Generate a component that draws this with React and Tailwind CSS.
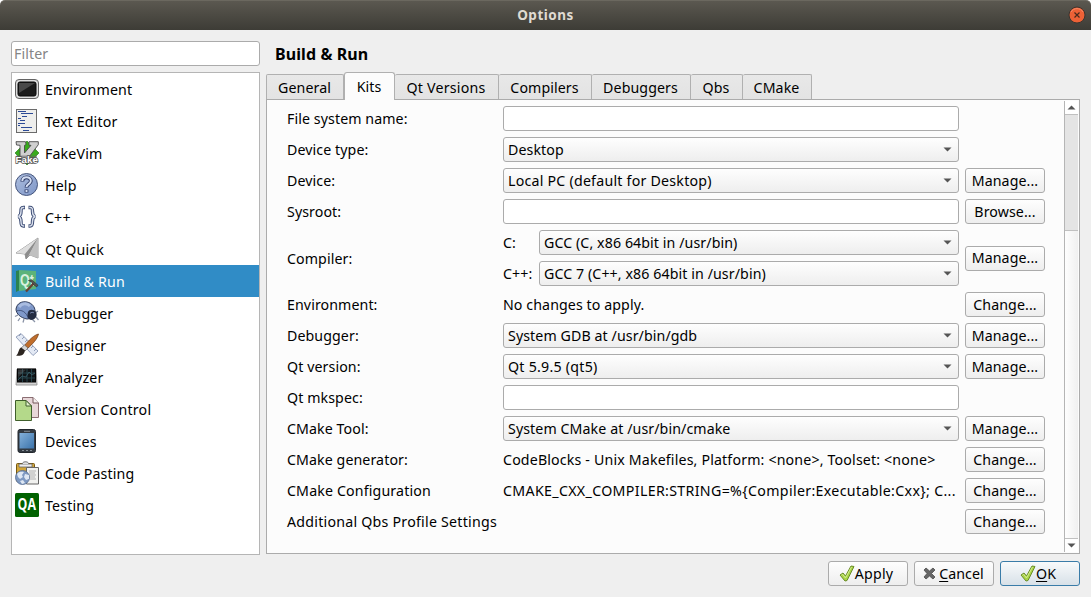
import React from "react";

const dark = "#2f3b66";

const Icons = {
  environment: (
    <>
      <rect x="0.5" y="2.5" width="23" height="19" rx="3.5" fill="#dcdcdc" stroke="#636363" />
      <rect x="3" y="5" width="18" height="14" rx="2" fill="#1b1b1b" stroke="#080808" />
      <path d="M4 6h16L4 16z" fill="#5a5a5a" opacity=".75" />
    </>
  ),
  text: (
    <>
      <rect x="1.5" y=".5" width="20" height="23" fill="#eeeeec" stroke="#6b6b6b" />
      <path d="M3 2.500h8M6 4.500h12M7 7.500h5M3 9.500h3M5 11.500h5M3 14.500h7M3 16.500h2M6 18.500h11M8 21.500h6" stroke="#2c4a96" strokeWidth="1" />
    </>
  ),
  vim: (
    <>
      <path d="M12 0l12 12-12 12L0 12z" fill="#38ab1c" stroke="#226d10" strokeWidth=".6" />
      <path d="M1 .7h9.500l.6 2.800-1.600.8V12L16 4.300h-2V.7h9.300v3L12.500 18H5V4.300L1.500 4z" fill="#d0d0d0" stroke="#4a4a4a" strokeWidth=".9" />
      <path d="M1 14.500h21v7H1z" fill="#666" opacity=".55" />
      <text x="0.500" y="21.500" fontSize="9.500" fontWeight="bold" fontFamily="Liberation Sans, sans-serif" fill="#fff" stroke="#555" strokeWidth="1.500" paintOrder="stroke" textLength="22.500" lengthAdjust="spacingAndGlyphs">Fake</text>
    </>
  ),
  help: (
    <>
      <defs>
        <linearGradient id="hg" x1="0" y1="0" x2="1" y2="1"><stop offset="0" stopColor="#aebfdf" /><stop offset="1" stopColor="#7d95c7" /></linearGradient>
      </defs>
      <circle cx="11.500" cy="11.500" r="11" fill="url(#hg)" stroke="#3a4a70" strokeWidth=".9" />
      <path d="M7.300 8.500c0-5.500 8.500-5.500 8.500-.5 0 3.200-4.300 3-4.300 6.500M11.500 16.500v3" fill="none" stroke={dark} strokeWidth="3.800" />
      <path d="M7.300 8c0-5 8.500-5 8.500 0 0 3.200-4.300 3-4.300 6M11.500 17.100v1.800" fill="none" stroke="#d3def3" strokeWidth="2" />
    </>
  ),
  cpp: (
    <>
      <path d="M10 2.500H8.500c-2.500 0-2.500 1.500-2.500 4s0 4-2.500 5c2.500 1 2.500 2.500 2.500 5s0 4.500 2.500 4.500H10M13.500 2.500H15c2.500 0 2.500 1.500 2.500 4s0 4 2.500 5c-2.500 1-2.500 2.500-2.500 5S17.500 21 15 21h-1.500" fill="none" stroke="#3d4d75" strokeWidth="3.400" strokeLinejoin="bevel" />
      <path d="M9.300 2.500h-.8C6 2.500 6 4 6 6.500s0 4-2.500 5c2.500 1 2.500 2.500 2.500 5s0 4.500 2.500 4.500h.8M14.200 2.500h.8c2.500 0 2.500 1.500 2.500 4s0 4 2.500 5c-2.500 1-2.500 2.500-2.500 5S17.500 21 15 21h-.8" fill="none" stroke="#d8deeb" strokeWidth="1.400" strokeLinejoin="bevel" />
    </>
  ),
  quick: (
    <>
      <path d="M1 16L23 1v20l-8-3-4 4-1-5z" fill="#c9c9c9" stroke="#858585" strokeWidth=".8" />
      <path d="M1 16L23 1 10 17z" fill="#dedede" />
      <path d="M23 1L10 17l1 5 3-4z" fill="#8c8c8c" />
      <path d="M23 1L14 18l9 3z" fill="#c0c0c0" />
    </>
  ),
  build: (
    <>
      <path d="M1 2L5 1v20l-4 2z" fill="#2c824f" />
      <path d="M4 1l17 1v18L4 22z" fill="#5cb37a" />
      <text x="5" y="17" fontSize="16" fontWeight="bold" fontFamily="Liberation Sans, sans-serif" fill="#d9f0df" textLength="14" lengthAdjust="spacingAndGlyphs">Qt</text>
      <path d="M11 22.500l7.500-8" stroke="#6b4030" strokeWidth="2.300" />
      <path d="M13.500 11.500l3-.8 6.500 5.500-1.300 1.700-3.200-2.200-1-2z" fill="#555" stroke="#2c2c2c" strokeWidth=".6" />
    </>
  ),
  debugger: (
    <>
      <path d="M3 14l-3 1.500M5 17l-2 3M9 18l-1 3.500M16 17l4 4M20 12l3-2M21 16l2.500 3" stroke="#8a93a6" strokeWidth="1.300" />
      <path d="M1 8C2 2 7 0 12 1c5 1 8 5 8 9 0 5-4 8-8 8C6 17 1 13 1 8z" fill="#7f98c9" stroke="#2f3b58" />
      <path d="M4 6c3-4 8-4 11-1" fill="none" stroke="#a9bce0" strokeWidth="3" />
      <path d="M1.500 10c5-2 10 1 12 8" fill="none" stroke="#3d4d75" strokeWidth=".9" />
      <path d="M13 11c1-3 6-3 8 0 2 4-1 8-5 8-4-1-4-5-3-8z" fill="#242c42" />
      <path d="M15 12.500c1-1.500 3-1.500 4-.5" fill="none" stroke="#7484aa" />
    </>
  ),
  designer: (
    <>
      <path d="M1 4l5-3.500L23 18l-5 4.500z" fill="#e3e9f4" stroke="#8c99b5" strokeWidth=".9" />
      <path d="M6 1l-2 2M9 4L7 6M12 7l-2 2M18 13l-2 2M21 16l-2 2" stroke="#7e8ba8" strokeWidth=".8" />
      <path d="M23.500 1c-1 5-5.500 9.500-11 14.500l-3-3C14 7 19 2 23.500 1z" fill="#c06e2c" stroke="#6e3a14" strokeWidth=".7" />
      <path d="M9.500 12l3.500 3-3 3-4-3z" fill="#d5d5d5" stroke="#555" strokeWidth=".6" />
      <path d="M6 14.500l4 3c-1 5-5 6-9 5 3-2 2-6 5-8z" fill="#2c2520" />
    </>
  ),
  analyzer: (
    <>
      <path d="M2 4h19l1 16H1z" fill="#d4d4d4" stroke="#858585" strokeWidth=".8" />
      <rect x="2.500" y="4" width="18" height="13" fill="#101417" stroke="#050505" />
      <path d="M3 8h17M3 13h17M7.500 4v13M12 4v13M16.500 4v13" stroke="#2b4e58" strokeWidth=".8" />
      <path d="M3 15l4-4 4 1 3-5 3 3 3-2" fill="none" stroke="#3c626d" strokeWidth=".8" />
      <path d="M3 4.500h8l-8 8z" fill="#888" opacity=".3" />
    </>
  ),
  version: (
    <>
      <path d="M7.500.5H18l5.500 5.500v14.500h-16z" fill="#e8d7d9" stroke="#8b6e73" />
      <path d="M18 .5V6h5.500" fill="#f5eeee" stroke="#75565b" />
      <path d="M.5 3.500H11L16.500 9v14.500H.5z" fill="#b4d98a" stroke="#3f5f2b" />
      <path d="M11 3.500V9h5.500z" fill="#e2f2ce" stroke="#3f5f2b" />
    </>
  ),
  devices: (
    <>
      <defs><linearGradient id="dg" x1="0" y1="0" x2="1" y2="1"><stop offset="0" stopColor="#84b1da" /><stop offset="1" stopColor="#3b73ab" /></linearGradient></defs>
      <rect x="3" y=".5" width="17.500" height="23" rx="2" fill="#333a42" stroke="#22272d" />
      <rect x="4.500" y="4" width="14.500" height="15.500" fill="url(#dg)" />
      <path d="M9 2.300h6M7 21.500h2M11 21.500h2M15 21.500h2" stroke="#8b949d" strokeWidth=".9" />
    </>
  ),
  pasting: (
    <>
      <rect x="1.500" y="2.500" width="18" height="18" rx="1" fill="#d2a63a" stroke="#755813" />
      <path d="M4 3h13v3H4z" fill="#eee" stroke="#666" strokeWidth=".8" />
      <path d="M7 3c1-3 6-3 7 0" fill="#ddd" stroke="#666" />
      <path d="M11.500 6.500h12v16.500h-12z" fill="#f1f1ef" stroke="#666" />
      <path d="M14 10h7M14 12h6M14 14h7M15 16h5M15 18h6" stroke="#aaa" strokeWidth=".9" />
      <circle cx="7.500" cy="16.500" r="7" fill="#7e99c2" stroke="#536b91" strokeWidth=".8" />
      <path d="M2 13c2-3 5-2 7-2l-2 3 1 2-3 2-2-2zM10 13l4 1v4l-3 1-2-3zM5 20l3-1 2 3-3 1z" fill="#dee7f3" />
    </>
  ),
  testing: (
    <>
      <rect width="24" height="24" rx="1.500" fill="#006100" />
      <text x="2.500" y="17" fontSize="16" fontWeight="bold" fontFamily="Open Sans, sans-serif" fill="#fff" textLength="18.500" lengthAdjust="spacingAndGlyphs">QA</text>
    </>
  ),
};

const pages = [
  ["environment", "Environment"],
  ["text", "Text Editor"],
  ["vim", "FakeVim"],
  ["help", "Help"],
  ["cpp", "C++"],
  ["quick", "Qt Quick"],
  ["build", "Build & Run"],
  ["debugger", "Debugger"],
  ["designer", "Designer"],
  ["analyzer", "Analyzer"],
  ["version", "Version Control"],
  ["devices", "Devices"],
  ["pasting", "Code Pasting"],
  ["testing", "Testing"],
];

const tabs = [
  ["General", "w-[78px]"],
  ["Kits", "w-[51px]"],
  ["Qt Versions", "w-[104px]"],
  ["Compilers", "w-[93px]"],
  ["Debuggers", "w-[99px]"],
  ["Qbs", "w-[52px]"],
  ["CMake", "w-[69px]"],
];

function Button({ children, primary = false }) {
  return (
    <button
      className={
        "flex h-[25px] w-20 shrink-0 items-center justify-center rounded-[3px] border bg-linear-to-b whitespace-nowrap " +
        (primary ? "border-[#3a7ca8] from-[#f8fafb] to-[#d8e1e8]" : "border-[#ababab] from-[#fefefe] to-[#eeeeee]")
      }
    >
      {children}
    </button>
  );
}

function Combo({ children, tracking = "" }) {
  return (
    <div className="flex h-[25px] min-w-0 flex-1 items-center justify-between rounded-[3px] border border-[#ababab] bg-linear-to-b from-[#fefefe] to-[#eeeeee] pr-[6px] pl-1">
      <span className={tracking}>{children}</span>
      <svg width="9" height="5" viewBox="0 0 9 5"><path d="M.5.5h8l-4 4z" fill="#555" /></svg>
    </div>
  );
}

const Field = () => <div className="h-[25px] flex-1 rounded-[3px] border border-[#ababab] bg-white" />;

function Row({ label, children, action, tracking = "" }) {
  return (
    <div className="flex h-[25px] items-center">
      <div className={"w-[216px] shrink-0 whitespace-nowrap " + tracking}>{label}</div>
      <div className="mr-1.5 flex w-[456px] shrink-0 items-center whitespace-nowrap">{children}</div>
      {action && <Button>{action}</Button>}
    </div>
  );
}

const Check = () => (
  <svg className="-ml-1" width="16" height="17" viewBox="0 0 16 17">
    <path d="M1 10l3-2 2.500 3L12 1l3 .5L8 15.500l-2 .5z" fill="#a9d543" stroke="#6b8d2a" strokeWidth="1" strokeLinejoin="round" />
    <path d="M2.500 10.200l1.200-.8L6.500 13l6-11" fill="none" stroke="#d3eb94" />
  </svg>
);

export default function App() {
  return (
    <div className="h-[597px] w-[1091px] overflow-hidden bg-white font-['Noto_Sans',sans-serif] text-[14.2px] leading-[18px] tracking-[0.09px] text-black">
      <div className="flex h-full flex-col rounded-t-[5px] bg-[#efefef]">
        <header className="grid h-[30px] shrink-0 grid-cols-[1fr_auto_1fr] items-center rounded-t-[5px] border-t border-[#6b685f] bg-linear-to-b from-[#5b5850] to-[#3d3c36]">
          <span className="col-start-2 -mt-0.5 text-[13.5px] font-bold tracking-[0.5px] text-[#dfdbd2]">Options</span>
          <svg className="col-start-3 mr-[5px] -mt-px justify-self-end" width="18" height="18" viewBox="0 0 18 18">
            <circle cx="9" cy="9" r="8" fill="#ed6136" stroke="#3a342f" />
            <path d="M3 6a7 7 0 0 1 12 0" fill="none" stroke="#f58b69" />
            <path d="M6.500 6.500l5 5M11.500 6.500l-5 5" stroke="#4a2a1c" strokeWidth="1.200" />
          </svg>
        </header>

        <main className="flex h-[525px] shrink-0 gap-1.5 pt-[11px] pr-[11px] pl-[11px]">
          <aside className="flex w-[249px] shrink-0 flex-col gap-[6px]">
            <div className="flex h-[25px] items-center rounded-[3px] border border-[#ababab] bg-white pl-[2px] text-[#858585]">Filter</div>
            <nav className="h-[483px] border border-[#b5b5b5] bg-white">
              {pages.map(([icon, name]) => (
                <div
                  key={icon}
                  className={"flex h-8 items-center gap-[6px] pl-[3px] " + (icon === "build" ? "bg-[#308cc6] text-white" : "")}
                >
                  <svg className="shrink-0 overflow-visible" width="24" height="24" viewBox="0 0 24 24">{Icons[icon]}</svg>
                  <span className={"pt-0.5 " + (icon === "version" ? "tracking-[0.23px]" : "tracking-[0.15px]")}>{name}</span>
                </div>
              ))}
            </nav>
          </aside>

          <section className="flex w-[814px] flex-col">
            <h1 className="h-[31px] pt-[4px] pl-[9px] text-[16px] font-bold">Build &amp; Run</h1>
            <div className="flex h-[27px] items-end">
              {tabs.map(([name, width]) => (
                <div
                  key={name}
                  className={
                    "flex shrink-0 items-center justify-center border-t border-r border-[#b0b0b0] pr-px " +
                    width +
                    (name === "Kits"
                      ? " relative z-10 -mb-px h-[28px] rounded-t-[3px] border-l bg-[#fcfcfc]"
                      : " h-[25px] rounded-t-[2px] bg-linear-to-b from-[#e8e8e8] to-[#e3e3e3] pt-px") +
                    (name === "General" ? " border-l" : "") +
                    (name === "Qt Versions" ? " tracking-[0.2px]" : "")
                  }
                >
                  {name}
                </div>
              ))}
            </div>
            <div className="flex h-[455px] border border-[#ababab] bg-[#fcfcfc]">
              <div className="flex w-[797px] flex-col gap-[6px] pt-1.5 pl-5">
                <Row label="File system name:"><Field /></Row>
                <Row label="Device type:"><Combo>Desktop</Combo></Row>
                <Row label="Device:" action="Manage..."><Combo tracking="tracking-[0.23px]">Local PC (default for Desktop)</Combo></Row>
                <Row label="Sysroot:" action="Browse..."><Field /></Row>
                <div className="flex h-[56px] items-center">
                  <div className="w-[216px] pt-px">Compiler:</div>
                  <div className="mr-1.5 flex w-[456px] flex-col gap-[6px]">
                    <div className="flex items-center"><span className="w-9">C:</span><Combo>GCC (C, x86 64bit in /usr/bin)</Combo></div>
                    <div className="flex items-center"><span className="w-9">C++:</span><Combo>GCC 7 (C++, x86 64bit in /usr/bin)</Combo></div>
                  </div>
                  <Button>Manage...</Button>
                </div>
                <Row label="Environment:" action="Change...">No changes to apply.</Row>
                <Row label="Debugger:" action="Manage..."><Combo>System GDB at /usr/bin/gdb</Combo></Row>
                <Row label="Qt version:" action="Manage..."><Combo tracking="tracking-[0.25px]">Qt 5.9.5 (qt5)</Combo></Row>
                <Row label="Qt mkspec:"><Field /></Row>
                <Row label="CMake Tool:" action="Manage..."><Combo>System CMake at /usr/bin/cmake</Combo></Row>
                <Row label="CMake generator:" action="Change..."><span className="tracking-[0.16px]">CodeBlocks - Unix Makefiles, Platform: &lt;none&gt;, Toolset: &lt;none&gt;</span></Row>
                <Row label="CMake Configuration" action="Change..." tracking="tracking-[0.15px]"><span className="tracking-[0.34px]">CMAKE_CXX_COMPILER:STRING=%&#123;Compiler:Executable:Cxx&#125;; C...</span></Row>
                <Row label="Additional Qbs Profile Settings" action="Change..." tracking="tracking-[0.24px]" />
              </div>
              <div className="my-px flex w-[14px] flex-col border-l border-[#b5b5b5]">
                <div className="flex h-[14px] items-center justify-center border-b border-[#c0c0c0] bg-white">
                  <svg width="9" height="5" viewBox="0 0 9 5"><path d="M.5 4.500h8l-4-4z" fill="#555" /></svg>
                </div>
                <div className="h-[115px] bg-[#e4e4e4]" />
                <div className="flex-1 border-y border-[#c0c0c0] bg-linear-to-r from-[#fefefe] to-[#f0f0f0]" />
                <div className="flex h-[13px] items-center justify-center bg-white">
                  <svg width="9" height="5" viewBox="0 0 9 5"><path d="M.5.5h8l-4 4z" fill="#555" /></svg>
                </div>
              </div>
            </div>
          </section>
        </main>

        <footer className="flex justify-end gap-1.5 pt-1.5 pr-[11px]">
          <Button><Check /><span className="tracking-[0.2px]">Apply</span></Button>
          <Button>
            <svg className="-ml-px mr-[3px]" width="13" height="13" viewBox="0 0 13 13">
              <path d="M1 3l2-2 3.500 3L10 1l2 2-3.500 3.500L12 10l-2 2-3.500-3L3 12l-2-2 3-3.500z" fill="#666" stroke="#4d4d4d" strokeWidth=".8" />
            </svg>
            <span><u className="underline-offset-2">C</u>ancel</span>
          </Button>
          <Button primary><Check /><span><u className="underline-offset-2">O</u>K</span></Button>
        </footer>
      </div>
    </div>
  );
}
